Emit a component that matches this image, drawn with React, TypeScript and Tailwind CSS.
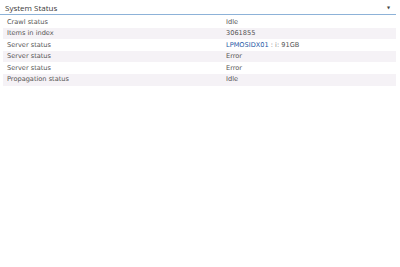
const rows: { label: string; value: React.ReactNode }[] = [
  { label: "Crawl status", value: "Idle" },
  { label: "Items in index", value: "3061855" },
  {
    label: "Server status",
    value: (
      <>
        <span className="text-[#1f5aa6]">LPMOSIDX01</span> <span className="text-[#888]">: i:</span> 91GB
      </>
    ),
  },
  { label: "Server status", value: "Error" },
  { label: "Server status", value: "Error" },
  { label: "Propagation status", value: "Idle" },
];

export default function App() {
  return (
    <div className="w-[400px] h-[267px] bg-white" style={{ fontFamily: '"DejaVu Sans", Verdana, sans-serif' }}>
      <div className="w-[396px] pt-[2px]">
        {/* header */}
        <div className="flex items-center justify-between h-[13px] border-b border-[#8db2d8] pl-[5px] pr-[6px]">
          <span className="text-[8px] leading-none text-[#3a3a3a]" style={{ fontFamily: '"Open Sans", "Noto Sans", sans-serif' }}>
            System Status
          </span>
          <span className="text-[4px] leading-none text-[#444] -mt-[1px]">▼</span>
        </div>

        <div className="ml-[3px] pt-[1px]">
          {rows.map((r, i) => (
            <div
              key={i}
              className={`flex items-center h-[11.6px] text-[6.6px] leading-none text-[#555] ${i % 2 === 1 ? "bg-[#f5f2f6]" : "bg-white"}`}
            >
              <div className="w-[223px] pl-[4px]">{r.label}</div>
              <div>{r.value}</div>
            </div>
          ))}
        </div>
      </div>
    </div>
  );
}
